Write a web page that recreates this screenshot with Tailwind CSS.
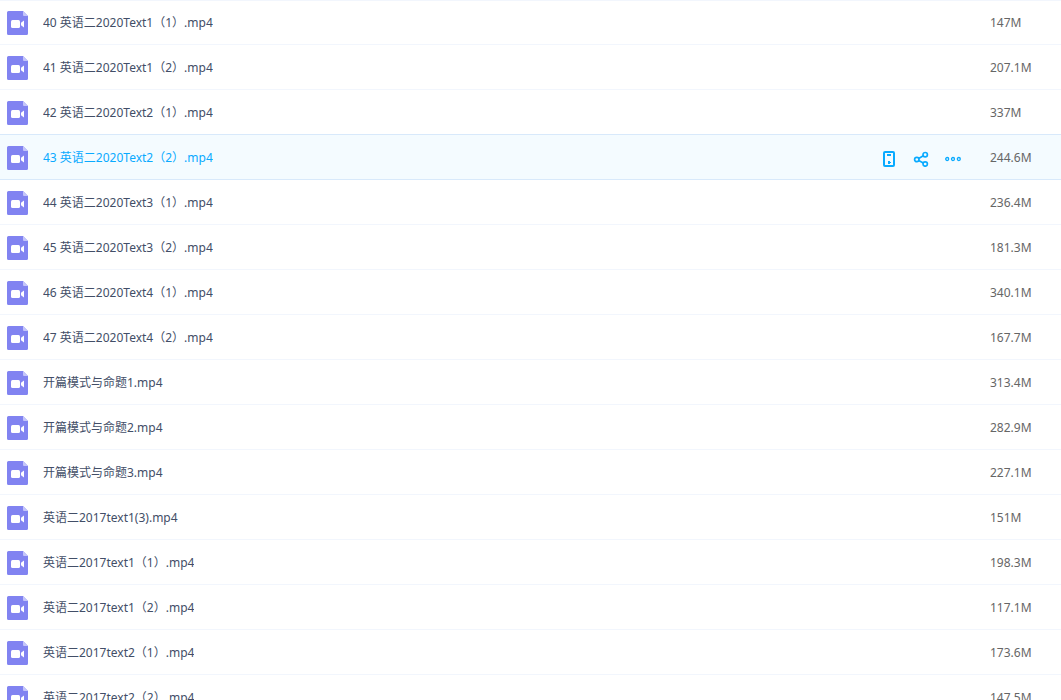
<!DOCTYPE html>
<html lang="zh-CN">
<head>
<meta charset="utf-8">
<meta name="viewport" content="width=device-width, initial-scale=1">
<title>文件列表</title>
<script src="https://cdn.jsdelivr.net/npm/@tailwindcss/browser@4"></script>
</head>
<body class="bg-white">
<svg class="hidden" aria-hidden="true">
  <symbol id="video-file" viewBox="0 0 21 24">
    <path d="M1.500 0H16l5 5v17.500a1.500 1.500 0 0 1-1.500 1.500h-18A1.500 1.500 0 0 1 0 22.500v-21A1.500 1.500 0 0 1 1.500 0z" fill="#8183f1"/>
    <path d="M16 0l5 5h-4a1 1 0 0 1-1-1z" fill="#c4c5fa"/>
    <rect x="4" y="9" width="9" height="8" rx="1.500" fill="#fff"/>
    <path d="M17 9.500v7l-3-2.300v-2.400z" fill="#fff"/>
  </symbol>
</svg>
<main class="h-screen overflow-hidden font-['Noto_Sans','Noto_Sans_CJK_SC',sans-serif] text-xs">
  <table class="w-full table-fixed border-separate border-spacing-0">
    <colgroup><col><col class="w-[109px]"><col class="w-[71px]"></colgroup>
    <tbody id="files"></tbody>
  </table>
</main>
<script>
const files = [
  ['40 英语二2020Text1（1）.mp4', '147M'],
  ['41 英语二2020Text1（2）.mp4', '207.1M'],
  ['42 英语二2020Text2（1）.mp4', '337M'],
  ['43 英语二2020Text2（2）.mp4', '244.6M'],
  ['44 英语二2020Text3（1）.mp4', '236.4M'],
  ['45 英语二2020Text3（2）.mp4', '181.3M'],
  ['46 英语二2020Text4（1）.mp4', '340.1M'],
  ['47 英语二2020Text4（2）.mp4', '167.7M'],
  ['开篇模式与命题1.mp4', '313.4M'],
  ['开篇模式与命题2.mp4', '282.9M'],
  ['开篇模式与命题3.mp4', '227.1M'],
  ['英语二2017text1(3).mp4', '151M'],
  ['英语二2017text1（1）.mp4', '198.3M'],
  ['英语二2017text1（2）.mp4', '117.1M'],
  ['英语二2017text2（1）.mp4', '173.6M'],
  ['英语二2017text2（2）.mp4', '147.5M'],
];
const active = 3;
const actions = `
  <div class="flex items-center gap-4 pt-1">
    <button type="button" aria-label="发送到设备" class="size-4 text-[#09aaff]"><svg viewBox="0 0 16 16" class="size-4" fill="none" stroke="currentColor" stroke-width="2"><rect x="3" y="1" width="10" height="14" rx="1"/><path d="M6 4h4" stroke-width="2"/><path d="M7 10h2v1h1v1H9v1H7z" fill="currentColor" stroke="none"/></svg></button>
    <button type="button" aria-label="分享" class="size-4 text-[#09aaff]"><svg viewBox="0 0 16 16" class="size-4" fill="none" stroke="currentColor" stroke-width="1.700"><circle cx="3.800" cy="8.500" r="2.200"/><circle cx="12.200" cy="3.700" r="2.200"/><circle cx="12.200" cy="13" r="2.200"/><path d="M5.700 7.400L10.300 4.800M5.700 9.600L10.300 12"/></svg></button>
    <button type="button" aria-label="更多" class="size-4 text-[#09aaff]"><svg viewBox="0 0 16 16" class="size-4" fill="none" stroke="currentColor" stroke-width="1.300"><circle cx="2.200" cy="8" r="1.500"/><circle cx="8" cy="8" r="1.500"/><circle cx="13.800" cy="8" r="1.500"/></svg></button>
  </div>`;
document.getElementById('files').innerHTML = files.map(([name, size], i) => {
  const on = i === active;
  const line = on || i === active - 1 ? 'border-[#d8e9fb]' : 'border-[#f2f6fd]';
  const top = i === 0 ? 'shadow-[inset_0_1px_0_#f2f6fd]' : '';
  return `<tr class="${on ? 'bg-[#f4fbff]' : ''} ${top}">
    <td class="h-[45px] border-b p-0 pt-0.5 pl-[7px] ${line}"><div class="flex items-center gap-[15px]">
      <svg class="h-6 w-[21px] shrink-0" aria-hidden="true"><use href="#video-file"/></svg>
      <a href="#" class="truncate ${on ? 'text-[#09aaff]' : 'text-[#424e67]'}">${name}</a>
    </div></td>
    <td class="border-b p-0 ${line}">${on ? actions : ''}</td>
    <td class="border-b p-0 pt-0.5 text-[#666] ${line}">${size}</td>
  </tr>`;
}).join('');
</script>
</body>
</html>
